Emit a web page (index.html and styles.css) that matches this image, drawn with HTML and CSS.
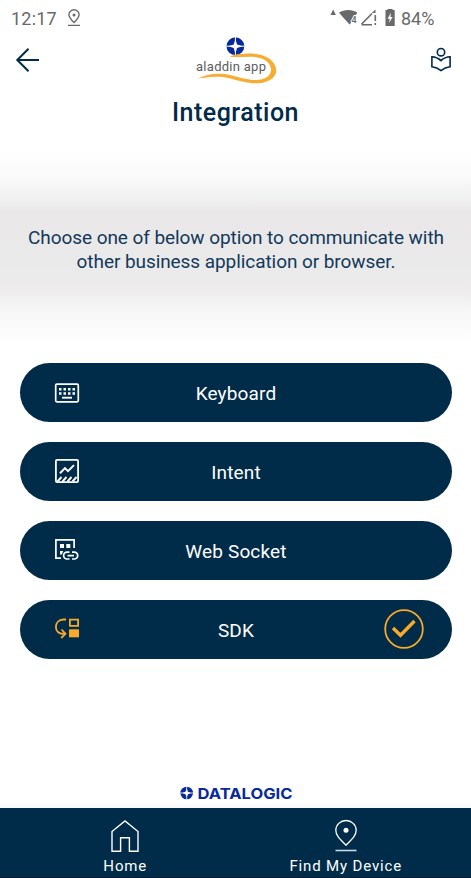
FILE: index.html
```html
<!DOCTYPE html>
<html lang="en">
<head>
<meta charset="utf-8">
<title>Integration</title>
<link rel="stylesheet" href="styles.css">
</head>
<body>
<div class="screen">
  <div class="status">
    <span class="time">12:17</span>
    <svg class="status-pin" width="14" height="18" viewBox="0 0 14 18" fill="none" stroke="#696969" stroke-width="1.4"><path d="M7 13.600C4 10.500 1.900 8.200 1.900 5.700a5.100 4.900 0 0 1 10.200 0c0 2.500-2.100 4.800-5.100 7.900zM1 16.400h12"/><circle cx="7" cy="6" r="1.500" fill="#696969" stroke="none"/></svg>
    <svg class="signals" width="68" height="20" viewBox="0 0 68 20">
      <path d="M0.500 7L3.200 1.500 5.900 7z" fill="#696969"/>
      <path d="M9 4.800C14 1 22.500 1 27.400 4.800L25 8l-3 2.500V14l-2.500 2.500z" fill="#696969"/>
      <text class="wifi-gen" x="21.500" y="14.800">4</text>
      <path d="M31.500 16.800H42M31.500 16.300L42 5.500" fill="none" stroke="#696969" stroke-width="1.600"/>
      <path d="M42 4.800l3.500-3.300V5H42zM44.500 7h1.600v6h-1.600zM44.500 15h1.600v2h-1.600z" fill="#696969"/>
      <path d="M55.500 2h2V1h5v1h2.200v16H55.500z" fill="#696969"/>
      <path d="M61 4.800l-3.500 6h2.200L59 15l3.600-6h-2.200z" fill="#fff"/>
    </svg>
    <span class="percent">84%</span>
  </div>
  <header class="topbar">
    <svg class="back" width="26" height="26" viewBox="0 0 26 26" fill="none" stroke="#002b49" stroke-width="2"><path d="M24 13H2.500M13.500 1.800L2.300 13l11.200 11.200"/></svg>
    <svg class="logo" width="90" height="52" viewBox="0 0 90 52">
      <circle cx="45.400" cy="13.200" r="8.900" fill="#08299c"/>
      <path d="M45.400 4v18.400M36.200 13.200h18.400" stroke="#fff" stroke-width="1"/>
      <path d="M45.400 6.200l1.700 5.300 5.300 1.700-5.300 1.700-1.700 5.300-1.700-5.300-5.300-1.700 5.300-1.700z" fill="#fff"/>
      <path d="M39 23.500C50 19.500 67 19.200 76 23.700 88 29.800 90 42 79 47.500 67 53.500 52 48.500 39 45.200 28 42.500 16 44 8 45.800 17 41 28 39.400 41 42.300 54 45.500 64 49.300 74 45.500 84 41.500 83 31 73 26 63 21.500 50 25.500 39 23.500z" fill="#f7ad32"/>
      <text class="logo-text" x="6" y="37.800" textLength="70" lengthAdjust="spacing">aladdin app</text>
    </svg>
    <svg class="reader" width="22" height="26" viewBox="0 0 22 26" fill="none" stroke="#002b49" stroke-width="1.600"><circle cx="11" cy="5.200" r="3.700"/><path d="M1.900 9.800C5.500 10 8.500 11.300 11 13.600 13.500 11.300 16.500 10 20.100 9.800V19.800C16.500 20.300 13.500 21.600 11 23.600 8.500 21.600 5.500 20.300 1.900 19.800z"/></svg>
  </header>
  <h1>Integration</h1>
  <div class="intro">
    <p>Choose one of below option to communicate with<br>other business application or browser.</p>
  </div>
  <main class="options">
    <button class="option">
      <svg width="26" height="26" viewBox="0 0 26 26"><rect x="1.700" y="4.200" width="22.600" height="17.600" rx="1.200" fill="none" stroke="#fff" stroke-width="1.700"/><path d="M5 9.200h17M5 13.500h17" stroke="#fff" stroke-width="2.500" stroke-dasharray="2.500 2"/><path d="M8 17.700h10" stroke="#fff" stroke-width="1.900"/></svg>
      <span>Keyboard</span><i></i>
    </button>
    <button class="option">
      <svg width="26" height="26" viewBox="0 0 26 26" fill="none" stroke="#fff"><rect x="1.900" y="1.900" width="22.200" height="22.200" rx="1.200" stroke-width="1.800"/><path d="M6 15.300l5-5.200 3 3 6-6" stroke-width="2"/><path d="M3.500 23.500l4-4.500M8.500 23.500l4-4.500M13.500 23.500l4-4.500M18.500 23.500l4-4.500" stroke-width="1.900"/></svg>
      <span>Intent</span><i></i>
    </button>
    <button class="option">
      <svg width="26" height="26" viewBox="0 0 26 26" fill="none" stroke="#fff" stroke-width="1.700"><path d="M20.100 11V2.900H1.900v18.200H7"/><path d="M6 7h4v4H6zM12.300 7h4v4h-4zM6 14h3.300l-1.500 3.500H6z" fill="#fff" stroke="none"/><path d="M15.500 15.200H13a3.400 3.400 0 0 0 0 6.800h2.500M18 15.200h2.300a3.400 3.400 0 0 1 0 6.800H18M13.500 18.600h6.500"/></svg>
      <span>Web Socket</span><i></i>
    </button>
    <button class="option">
      <svg width="26" height="26" viewBox="0 0 26 26" fill="none" stroke="#f8aa28" stroke-width="1.800"><path d="M12 3.500H9.500C4.500 3.500 1.900 7 1.900 11c0 4.500 3.300 7 9 7M7.500 13.500l4 4.300-4.300 4.200"/><path d="M15.900 3.700h8.200v6.200h-8.200z"/><path d="M15 13.300h10v8H15z" fill="#f8aa28" stroke="none"/></svg>
      <span>SDK</span>
      <svg class="check" width="42" height="42" viewBox="0 0 42 42" fill="none" stroke="#f8aa28"><circle cx="21" cy="21" r="18.800" stroke-width="1.800"/><path d="M10 20l7.500 7.300L31.500 13" stroke-width="3.400"/></svg>
    </button>
  </main>
  <footer class="brand">
    <svg width="114" height="16" viewBox="0 0 114 16">
      <circle cx="7.700" cy="8" r="6.300" fill="#08299c"/><path d="M7.700 1.500v13M1.200 8h13" stroke="#fff" stroke-width=".8"/><path d="M7.700 3.800L9 6.700 11.900 8 9 9.300l-1.300 2.900-1.300-2.900L3.500 8l2.900-1.300z" fill="#fff"/>
      <text class="brand-text" x="18.500" y="13.500" textLength="95" lengthAdjust="spacingAndGlyphs">DATALOGIC</text>
    </svg>
  </footer>
  <nav class="tabs">
    <a class="tab"><svg width="32" height="34" viewBox="0 0 32 34" fill="none" stroke="#fff" stroke-width="1.400"><path d="M3 12.500L16 2l13 10.500V32.200h-8.600V18.800h-8.800v13.400H3z"/></svg><span>Home</span></a>
    <a class="tab"><svg width="32" height="34" viewBox="0 0 32 34" fill="none" stroke="#fff" stroke-width="1.300"><path d="M16 26.200C10 20.200 5.800 16.500 5.800 11.300a10.200 9.800 0 0 1 20.400 0c0 5.200-4.200 8.900-10.200 14.900z"/><path d="M5.500 31.500h21" stroke="#c9dae4" stroke-width="1.600"/><circle cx="16" cy="11.300" r="2.500" fill="#fff" stroke="none"/></svg><span>Find My Device</span></a>
  </nav>
</div>
</body>
</html>
```
FILE: styles.css
```css
* { box-sizing: border-box; }
body { margin: 0; background: #fff; color: #002b49; font-family: Roboto, "Liberation Sans", sans-serif; }
.screen { width: 471px; height: 878px; display: flex; flex-direction: column; overflow: hidden; }
.status { height: 34px; display: flex; align-items: center; padding: 3px 36px 0 11px; color: #696969; }
.time { font-size: 18px; line-height: 20px; width: 56px; letter-spacing: .2px; }
.status-pin { margin-top: -1px; }
.signals { margin-left: auto; margin-top: -2px; }
.wifi-gen { font: 500 9px Roboto, sans-serif; fill: #696969; stroke: #fff; stroke-width: 2px; paint-order: stroke; }
.percent { width: 34px; margin-left: 3px; font-size: 18px; line-height: 20px; white-space: nowrap; }
.topbar { height: 52px; display: grid; grid-template-columns: 1fr 90px 1fr; align-items: center; padding: 0 19px 0 15px; }
.logo { margin: -3px 0 0 1px; }
.reader { justify-self: end; }
.logo-text { font: 400 13px Roboto, sans-serif; fill: #5c5c5c; }
h1 { margin: 12px 0 0; height: 30px; line-height: 30px; font-size: 25px; font-weight: 500; text-align: center; letter-spacing: .5px; }
.intro { height: 194px; margin-top: 23px; padding: 75px 0 0 1px; background: linear-gradient(#fff 0, #fafafa 25px, #f1f0f1 48px, #e9e7e8 61px, #ebeaea 112px, #edebec 138px, #f7f7f7 160px, #fff 194px); }
.intro p { margin: 0; text-align: center; font-size: 19px; line-height: 24px; letter-spacing: -.07px; white-space: nowrap; color: #12395a; }
.options { display: flex; flex-direction: column; gap: 19.800px; padding: 18.200px 19px 0 20px; }
.option { height: 59px; border: 0; border-radius: 30px; padding: 0 27px 0 34px; background: #002b49; color: #fff; display: grid; grid-template-columns: 42px 1fr 42px; align-items: center; font: 450 19px/24px Roboto, sans-serif; letter-spacing: .15px; text-align: center; }
.option span { padding-top: 3px; margin-right: 7px; }
.brand { margin-top: auto; height: 23px; display: flex; justify-content: center; background: linear-gradient(#fff 70%, #f8f8f8); }
.brand-text { font: 700 15px Inter, sans-serif; fill: #08299c; }
.tabs { height: 70px; padding: 0 15px; display: flex; background: #002b49; border-bottom: 1px solid #001b32; color: #fff; }
.tab { flex: 1; display: flex; flex-direction: column; align-items: center; padding-top: 11px; font-size: 15px; line-height: 20px; }
.tab span { margin-top: 3px; letter-spacing: .85px; }
```
